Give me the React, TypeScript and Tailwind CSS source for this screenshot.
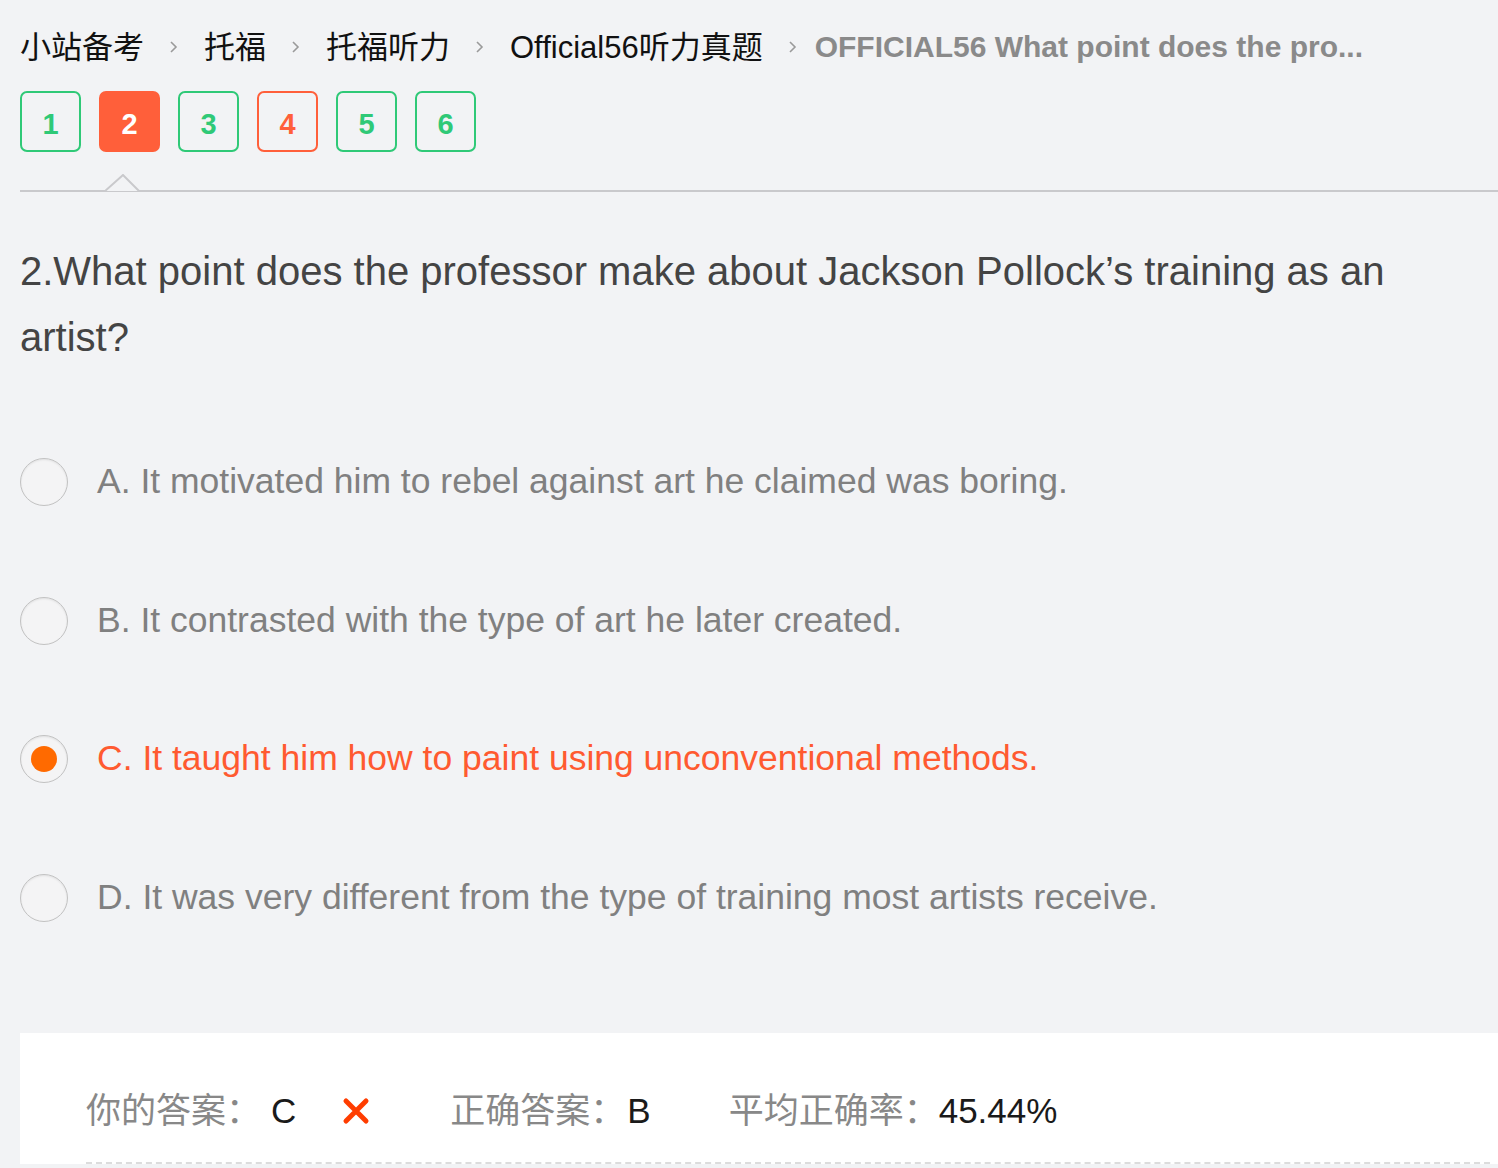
import React from "react";

const CRUMBS = ["小站备考", "托福", "托福听力", "Official56听力真题"];

const STEPS: { n: number; state: "done" | "current" | "wrong" }[] = [
  { n: 1, state: "done" },
  { n: 2, state: "current" },
  { n: 3, state: "done" },
  { n: 4, state: "wrong" },
  { n: 5, state: "done" },
  { n: 6, state: "done" },
];

const OPTIONS = [
  { key: "A", text: "It motivated him to rebel against art he claimed was boring." },
  { key: "B", text: "It contrasted with the type of art he later created." },
  { key: "C", text: "It taught him how to paint using unconventional methods." },
  { key: "D", text: "It was very different from the type of training most artists receive." },
];

const PICKED = "C";

function Chevron({ className = "" }: { className?: string }) {
  return (
    <svg width="10" height="16" viewBox="0 0 10 16" className={className} aria-hidden>
      <polyline points="2,3 7,8 2,13" fill="none" stroke="#9a9a9a" strokeWidth="1.6" />
    </svg>
  );
}

function Radio({ checked }: { checked: boolean }) {
  return (
    <span className="flex h-[48px] w-[48px] shrink-0 items-center justify-center rounded-full border-[1.5px] border-[#c2c2c2] bg-[#f4f4f5] shadow-[inset_0_1px_2px_rgba(0,0,0,0.08)]">
      {checked && <span className="h-[26px] w-[26px] rounded-full bg-[#ff6a00]" />}
    </span>
  );
}

export default function App() {
  return (
    <div className="min-h-screen overflow-hidden bg-[#f2f3f5] pl-5 font-['Liberation_Sans','Noto_Sans_CJK_SC',sans-serif]">
      {/* breadcrumb */}
      <nav className="mt-[25px] flex h-[44px] items-center text-[31px] leading-none">
        {CRUMBS.map((c) => (
          <React.Fragment key={c}>
            <span className="text-[#111]">{c}</span>
            <Chevron className="mx-[25px]" />
          </React.Fragment>
        ))}
        <span className="-ml-[8px] text-[30px] font-bold text-[#8a8a8a]">OFFICIAL56 What point does the pro...</span>
      </nav>

      {/* question steps */}
      <div className="mt-[22px] flex gap-[18px]">
        {STEPS.map((s) => (
          <span
            key={s.n}
            className={
              s.state === "current"
                ? "flex h-[61px] w-[61px] items-center justify-center rounded-[7px] bg-[#ff5f3a] pt-[6px] text-[29px] font-bold text-white"
                : s.state === "wrong"
                ? "flex h-[61px] w-[61px] items-center justify-center rounded-[7px] border-2 border-[#ff5f3a] pt-[6px] text-[29px] font-bold text-[#ff5f3a]"
                : "flex h-[61px] w-[61px] items-center justify-center rounded-[7px] border-2 border-[#2fc977] pt-[6px] text-[29px] font-bold text-[#2fc977]"
            }
          >
            {s.n}
          </span>
        ))}
      </div>

      {/* divider with caret under the current step */}
      <div className="relative mt-[38px] h-[2px] bg-[#c9c9cc]">
        <svg width="36" height="18" viewBox="0 0 36 18" className="absolute bottom-0 left-[85px]" aria-hidden>
          <polygon points="0,17 18,1 34,17" fill="#f2f3f5" />
          <polyline points="0,17 18,1 34,17" fill="none" stroke="#c9c9cc" strokeWidth="2" />
        </svg>
      </div>

      {/* question */}
      <h1 className="mt-[46px] pr-[90px] text-[40px] leading-[66px] font-normal text-[#444]">
        2.What point does the professor make about Jackson Pollock’s training as an artist?
      </h1>

      {/* options */}
      <ul className="mt-[88px] flex flex-col gap-[90.5px]">
        {OPTIONS.map((o) => {
          const on = o.key === PICKED;
          return (
            <li key={o.key} className="flex h-[48px] items-center">
              <Radio checked={on} />
              <span className={`ml-[29px] text-[35.5px] ${on ? "text-[#ff5a30]" : "text-[#808080]"}`}>
                {o.key}. {o.text}
              </span>
            </li>
          );
        })}
      </ul>

      {/* result card */}
      <div className="mt-[111px] bg-white pt-[54px] pl-[66px]">
        <div className="flex h-[48px] items-center text-[35px] leading-none">
          <span className="text-[#888]">你的答案：</span>
          <span className="ml-[10px] text-[#1a1a1a]">C</span>
          <svg width="28" height="28" viewBox="0 0 28 28" className="ml-[46px]" aria-hidden>
            <path d="M4 4 L24 24 M24 4 L4 24" stroke="#ff3d00" strokeWidth="5" strokeLinecap="round" />
          </svg>
          <span className="ml-[80px] text-[#888]">正确答案：</span>
          <span className="ml-[2px] text-[#1a1a1a]">B</span>
          <span className="ml-[78px] text-[#888]">平均正确率：</span>
          <span className="text-[#1a1a1a]">45.44%</span>
        </div>
        <div className="mt-[27px] mr-[8px] border-b-2 border-dashed border-[#dcdcdc]" />
      </div>
    </div>
  );
}
